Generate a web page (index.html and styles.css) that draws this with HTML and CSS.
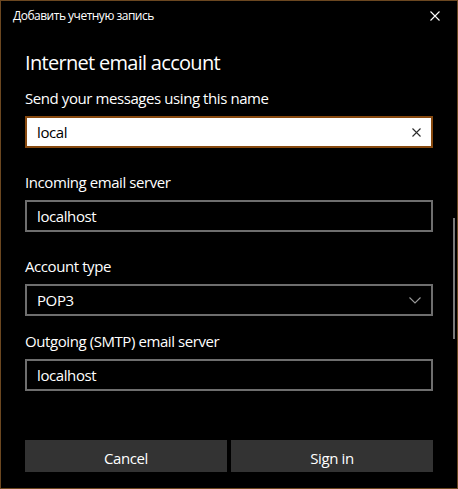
FILE: index.html
```html
<!DOCTYPE html>
<html>
<head>
<meta charset="utf-8">
<link rel="stylesheet" href="styles.css">
</head>
<body>
<div class="window">
  <div class="titlebar">
    <span class="title">Добавить учетную запись</span>
    <svg class="close" width="10" height="10" viewBox="0 0 10 10"><path d="M0.5 0.5 L9.5 9.5 M9.5 0.5 L0.5 9.5" stroke="#fff" stroke-width="1.1" fill="none"/></svg>
  </div>
  <div class="content">
    <h1 class="heading">Internet email account</h1>
    <div class="field first">
      <div class="label">Send your messages using this name</div>
      <div class="box focused">
        <span class="value">local</span>
        <svg class="clear" width="9" height="9" viewBox="0 0 9 9"><path d="M0.5 0.5 L8.5 8.5 M8.5 0.5 L0.5 8.5" stroke="#2b2b2b" stroke-width="1.1" fill="none"/></svg>
      </div>
    </div>
    <div class="field">
      <div class="label">Incoming email server</div>
      <div class="box"><span class="value">localhost</span></div>
    </div>
    <div class="field">
      <div class="label">Account type</div>
      <div class="box">
        <span class="value">POP3</span>
        <svg class="chevron" width="12" height="7" viewBox="0 0 12 7"><path d="M0.5 0.5 L6 6 L11.5 0.5" stroke="#9a9a9a" stroke-width="1.1" fill="none"/></svg>
      </div>
    </div>
    <div class="field last">
      <div class="label">Outgoing (SMTP) email server</div>
      <div class="box"><span class="value">localhost</span></div>
    </div>
    <div class="buttons">
      <div class="btn">Cancel</div>
      <div class="btn">Sign in</div>
    </div>
  </div>
  <div class="scrollbar"></div>
</div>
</body>
</html>
```
FILE: styles.css
```css
* { box-sizing: border-box; }
html, body { margin: 0; padding: 0; background: #000; }
body { font-family: "Open Sans", "Noto Sans", sans-serif; color: #fff; }
.window {
  position: relative;
  width: 458px;
  height: 489px;
  border: 1px solid #6b4720;
  background: #000;
}
.titlebar {
  height: 32px;
  display: flex;
  align-items: center;
  justify-content: space-between;
  padding: 0 17px 0 12px;
}
.title { font-size: 12px; line-height: 16px; margin-top: -2px; letter-spacing: -0.5px; }
.close { display: block; margin-top: -2px; }
.content { padding: 16px 24px 0 24px; }
.heading {
  margin: 0;
  font-size: 20px;
  font-weight: 400;
  line-height: 28px;
  letter-spacing: -0.7px;
}
.field { margin-top: 24px; }
.field.first { margin-top: 11px; }
.field.last { margin-top: 15px; }
.label { font-size: 15px; line-height: 20px; margin-bottom: 8px; letter-spacing: -0.42px; }
.box {
  height: 32px;
  border: 2px solid #6e6e6e;
  display: flex;
  align-items: center;
  justify-content: space-between;
  padding: 0 10px 0 10px;
}
.box.focused { background: #fff; border-color: #87490f; color: #000; }
.value { font-size: 15px; line-height: 20px; letter-spacing: -0.4px; margin-top: -1px; }
.clear { display: block; }
.chevron { display: block; margin-right: 0; }
.buttons {
  margin-top: 49px;
  display: flex;
  gap: 4px;
}
.btn {
  flex: 1;
  height: 32px;
  padding-top: 3px;
  background: #333;
  display: flex;
  align-items: center;
  justify-content: center;
  font-size: 15px;
  letter-spacing: -0.4px;
}
.scrollbar {
  position: absolute;
  left: 452px;
  top: 217px;
  width: 2px;
  height: 121px;
  background: #7a7a7a;
}
```
